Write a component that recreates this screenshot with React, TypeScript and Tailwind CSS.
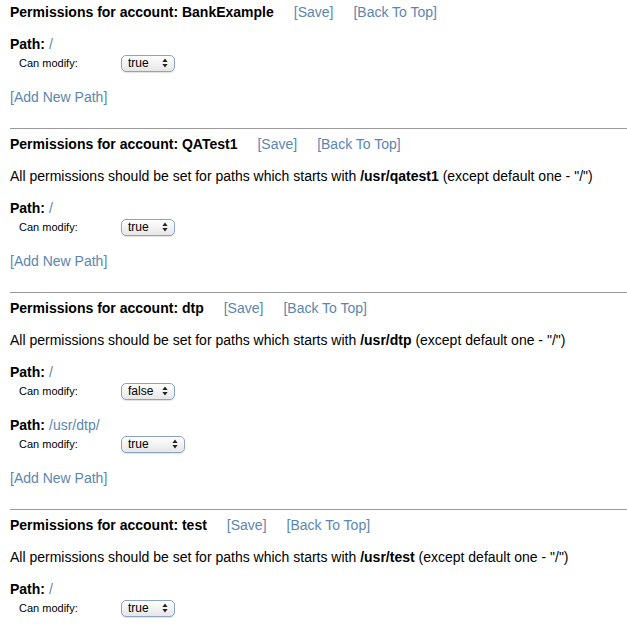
import React from 'react';

type PathPerm = { path: string; value: string; wide?: boolean };

type Account = {
  name: string;
  prefix?: string;
  paths: PathPerm[];
};

const accounts: Account[] = [
  { name: 'BankExample', paths: [{ path: '/', value: 'true' }] },
  { name: 'QATest1', prefix: '/usr/qatest1', paths: [{ path: '/', value: 'true' }] },
  {
    name: 'dtp',
    prefix: '/usr/dtp',
    paths: [
      { path: '/', value: 'false' },
      { path: '/usr/dtp/', value: 'true', wide: true },
    ],
  },
  { name: 'test', prefix: '/usr/test', paths: [{ path: '/', value: 'true' }] },
];

const linkCls = 'text-[#5b86b1] cursor-pointer';

const FakeSelect: React.FC<{ value: string; wide?: boolean }> = ({ value, wide }) => (
  <div
    className={
      (wide ? 'w-[64px] ' : 'w-[54px] ') +
      'h-[17px] rounded-[5px] border border-[#8aa3c6] bg-gradient-to-b from-white to-[#e6e6e6] flex items-center justify-between pl-[6px] pr-[6px] shadow-[0_1px_1px_rgba(0,0,0,0.12)]'
    }
  >
    <span className="text-[12px] leading-none text-black">{value}</span>
    <svg width="6" height="10" viewBox="0 0 6 10" className="shrink-0">
      <path d="M3 0.5 L5.6 4 L0.4 4 Z" fill="#222" />
      <path d="M3 9.5 L5.6 6 L0.4 6 Z" fill="#222" />
    </svg>
  </div>
);

const PathBlock: React.FC<{ p: PathPerm; mt: string }> = ({ p, mt }) => (
  <div className={mt}>
    <div className="h-[20px] flex items-center text-[14px]">
      <span className="font-bold">Path:</span>
      <span className={'ml-[4px] ' + linkCls}>{p.path}</span>
    </div>
    <div className="h-[18px] flex items-center pl-[9px]">
      <span className="w-[102px] text-[11px]">Can modify:</span>
      <FakeSelect value={p.value} wide={p.wide} />
    </div>
  </div>
);

const Section: React.FC<{ a: Account; first: boolean; last: boolean }> = ({ a, first, last }) => (
  <section className={first ? '' : 'mt-[3px]'}>
    <div className="h-[24px] flex items-center text-[14px]">
      <span className="font-bold">Permissions for account: {a.name}</span>
      <span className={'ml-[20px] ' + linkCls}>[Save]</span>
      <span className={'ml-[20px] ' + linkCls}>[Back To Top]</span>
    </div>
    {a.prefix && (
      <div className="mt-[10px] h-[20px] flex items-center text-[14px] whitespace-nowrap">
        All permissions should be set for paths which starts with&nbsp;
        <b>{a.prefix}</b>&nbsp;(except default one - "/")
      </div>
    )}
    {a.paths.map((p, i) => (
      <PathBlock key={i} p={p} mt={i > 0 ? 'mt-[15px]' : a.prefix ? 'mt-[12px]' : 'mt-[10px]'} />
    ))}
    {!last && (
      <>
        <div className={'mt-[15px] h-[20px] flex items-center text-[14px] ' + linkCls}>[Add New Path]</div>
        <hr className="mt-[21px] border-0 border-t border-[#9a9a9a] -mr-[10px]" />
      </>
    )}
  </section>
);

export default function App() {
  return (
    <div
      className="min-h-screen bg-white text-black pl-[10px] pr-[10px] overflow-hidden"
      style={{ fontFamily: '"Liberation Sans", Arial, Helvetica, sans-serif' }}
    >
      {accounts.map((a, i) => (
        <Section key={a.name} a={a} first={i === 0} last={i === accounts.length - 1} />
      ))}
    </div>
  );
}
